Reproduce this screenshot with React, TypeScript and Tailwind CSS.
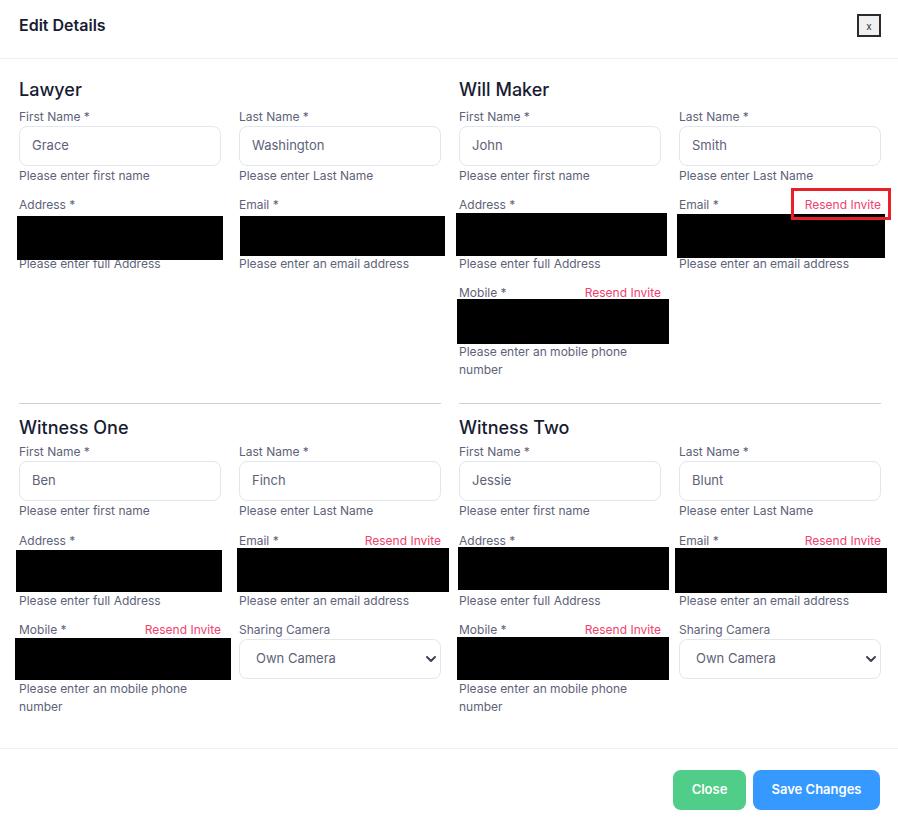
import React from "react";
import { ChevronDown } from "lucide-react";

function Label({ text, resend }: { text: string; resend?: boolean }) {
  return (
    <div className="flex items-center justify-between text-[12px] leading-[18px] text-[#5e6278]">
      <span>{text}</span>
      {resend && <span className="text-[12px] text-[#f1416c]">Resend Invite</span>}
    </div>
  );
}

function Help({ text }: { text: string }) {
  return <div className="mt-px text-[12px] leading-[18px] text-[#5e6278]">{text}</div>;
}

function TextField({ label, value, help, loose }: { label: string; value: string; help: string; loose?: boolean }) {
  return (
    <div className={loose ? "mb-[12px]" : "mb-[11px]"}>
      <Label text={label} />
      <div className="flex h-10 items-center rounded-[8px] border border-[#e4e6ef] px-[12px] pb-px text-[13px] text-[#5e6278]">
        {value}
      </div>
      <Help text={help} />
    </div>
  );
}

function RedactedField({ label, help, resend, box, tall }: { label: string; help: string; resend?: boolean; box: string; tall?: boolean }) {
  return (
    <div className="mb-[11px]">
      <Label text={label} resend={resend} />
      <div className={"relative " + (tall ? "h-[41px]" : "h-10")}>
        <div className={"absolute bg-black " + box} />
      </div>
      <Help text={help} />
    </div>
  );
}

function SelectField() {
  return (
    <div className="mb-[11px]">
      <Label text="Sharing Camera" />
      <div className="relative flex h-10 items-center rounded-[8px] border border-[#e4e6ef] px-[16px] pb-px text-[13px] text-[#5e6278]">
        <span>Own Camera</span>
        <ChevronDown className="absolute right-[1px] top-[11px] h-[16px] w-[16px] text-[#3f4254]" strokeWidth={3} />
      </div>
    </div>
  );
}

function Title({ text, tight }: { text: string; tight?: boolean }) {
  return (
    <div className={"text-[18px] font-medium leading-[24px] text-[#181c32] " + (tight ? "mb-[3px]" : "mb-[6px]")}>
      {text}
    </div>
  );
}

export default function App() {
  return (
    <div className="relative h-[826px] w-[898px] bg-white font-['Inter',sans-serif]">
      <div className="flex h-[59px] items-start justify-between border-b border-[#eff2f5] pl-[19px] pr-[17px] pt-[13px]">
        <div className="text-[16px] font-semibold leading-[24px] text-[#181c32]">Edit Details</div>
        <button className="mt-[1px] flex h-[23px] w-[24px] items-center justify-center border-2 border-[#2b2b2b] bg-[#f0f0f0] text-[10px] leading-none text-[#333]">
          x
        </button>
      </div>

      <div className="grid grid-cols-2 gap-x-[18px] pb-[21px] pl-[19px] pr-[17px] pt-[19px]">
        {/* Lawyer */}
        <div className="mb-[13px]">
          <Title text="Lawyer" />
          <div className="grid grid-cols-2 gap-x-[18px]">
            <TextField label="First Name *" value="Grace" help="Please enter first name" />
            <TextField label="Last Name *" value="Washington" help="Please enter Last Name" />
            <RedactedField label="Address *" help="Please enter full Address" box="left-[-2px] top-[2px] h-[44px] w-[206px]" />
            <RedactedField label="Email *" help="Please enter an email address" box="left-[1px] top-[2px] h-[40px] w-[205px]" />
          </div>
        </div>

        {/* Will Maker */}
        <div className="mb-[13px]">
          <Title text="Will Maker" />
          <div className="grid grid-cols-2 gap-x-[18px]">
            <TextField label="First Name *" value="John" help="Please enter first name" />
            <TextField label="Last Name *" value="Smith" help="Please enter Last Name" />
            <RedactedField label="Address *" help="Please enter full Address" box="left-[-3px] top-[-1px] h-[43px] w-[211px]" />
            <div className="relative">
              <RedactedField label="Email *" resend help="Please enter an email address" box="left-[-2px] top-0 h-[44px] w-[208px]" />
              <div className="absolute left-[112px] top-[-8px] h-[32px] w-[100px] border-[3px] border-[#e8202a]" />
            </div>
            <RedactedField label="Mobile *" resend help="Please enter an mobile phone number" box="left-[-2px] top-[-3px] h-[45px] w-[212px]" />
          </div>
        </div>

        {/* Witness One */}
        <div className="border-t border-[#cfd1d6] pt-[12px]">
          <Title text="Witness One" tight />
          <div className="grid grid-cols-2 gap-x-[18px]">
            <TextField loose label="First Name *" value="Ben" help="Please enter first name" />
            <TextField loose label="Last Name *" value="Finch" help="Please enter Last Name" />
            <RedactedField tall label="Address *" help="Please enter full Address" box="left-[-3px] top-0 h-[42px] w-[206px]" />
            <RedactedField tall label="Email *" resend help="Please enter an email address" box="left-[-2px] top-[-2px] h-[44px] w-[212px]" />
            <RedactedField label="Mobile *" resend help="Please enter an mobile phone number" box="left-[-4px] top-[-1px] h-[42px] w-[216px]" />
            <SelectField />
          </div>
        </div>

        {/* Witness Two */}
        <div className="border-t border-[#cfd1d6] pt-[12px]">
          <Title text="Witness Two" tight />
          <div className="grid grid-cols-2 gap-x-[18px]">
            <TextField loose label="First Name *" value="Jessie" help="Please enter first name" />
            <TextField loose label="Last Name *" value="Blunt" help="Please enter Last Name" />
            <RedactedField tall label="Address *" help="Please enter full Address" box="left-[-1px] top-[-3px] h-[43px] w-[211px]" />
            <RedactedField tall label="Email *" resend help="Please enter an email address" box="left-[-4px] top-[-2px] h-[45px] w-[212px]" />
            <RedactedField label="Mobile *" resend help="Please enter an mobile phone number" box="left-[-2px] top-[-2px] h-[43px] w-[212px]" />
            <SelectField />
          </div>
        </div>
      </div>

      <div className="flex justify-end gap-[7px] border-t border-[#eff2f5] pb-[16px] pr-[18px] pt-[21px]">
        <button className="h-10 w-[73px] rounded-[8px] bg-[#50cd89] text-[13px] font-semibold text-white">Close</button>
        <button className="h-10 w-[127px] rounded-[8px] bg-[#3699ff] text-[13px] font-semibold text-white">Save Changes</button>
      </div>
    </div>
  );
}
